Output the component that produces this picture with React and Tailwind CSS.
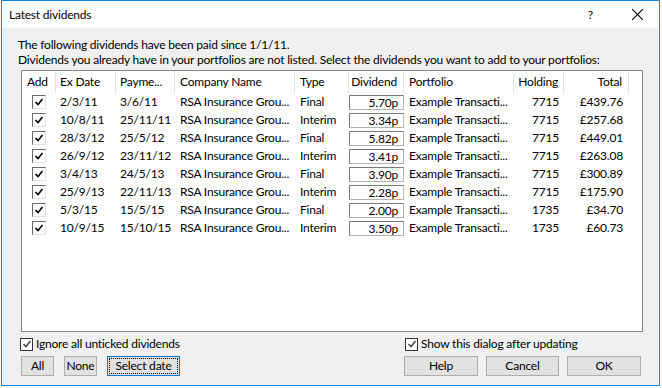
const rows = [
  ["2/3/11", "3/6/11", "Final", "5.70p", "7715", "£439.76"],
  ["10/8/11", "25/11/11", "Interim", "3.34p", "7715", "£257.68"],
  ["28/3/12", "25/5/12", "Final", "5.82p", "7715", "£449.01"],
  ["26/9/12", "23/11/12", "Interim", "3.41p", "7715", "£263.08"],
  ["3/4/13", "24/5/13", "Final", "3.90p", "7715", "£300.89"],
  ["25/9/13", "22/11/13", "Interim", "2.28p", "7715", "£175.90"],
  ["5/3/15", "15/5/15", "Final", "2.00p", "1735", "£34.70"],
  ["10/9/15", "15/10/15", "Interim", "3.50p", "1735", "£60.73"],
];

const cols = "grid grid-cols-[34px_60px_59px_120px_54px_55px_110px_50px_65px]";

function Tick({ className }) {
  return (
    <svg viewBox="0 0 10 10" className={className}>
      <path d="M1.5 5 L4 7.5 L8.5 2" fill="none" stroke="currentColor" strokeWidth="1.6" />
    </svg>
  );
}

function RowCheck() {
  return (
    <span className="ml-[10px] w-[14px] h-[14px] bg-white border-t border-l border-[#696969] border-r border-b border-r-[#e3e3e3] border-b-[#e3e3e3] flex items-center justify-center">
      <Tick className="w-[10px] h-[10px] text-black" />
    </span>
  );
}

function Check({ label }) {
  return (
    <label className="flex items-center gap-[3px] whitespace-nowrap">
      <span className="w-[13px] h-[13px] bg-white border border-[#333333] flex items-center justify-center">
        <Tick className="w-[10px] h-[10px] text-[#4a4a4a]" />
      </span>
      <span>{label}</span>
    </label>
  );
}

function Button({ children, width, focused }) {
  if (focused) {
    return (
      <button className={"h-[20px] bg-[#e1e1e1] border border-[#0078d7] p-[1px] flex whitespace-nowrap " + width}>
        <span className="flex-1 border border-dotted border-black flex items-center justify-center">{children}</span>
      </button>
    );
  }
  return (
    <button className={"h-[20px] bg-[#e1e1e1] border border-[#adadad] flex items-center justify-center whitespace-nowrap " + width}>
      {children}
    </button>
  );
}

export default function App() {
  return (
    <div className="w-[662px] h-[388px] bg-white text-[12px] tracking-[-0.2px] text-black font-['Lato',sans-serif]">
      <div className="ml-[1px] w-[659px] h-[386px] border border-[#1883d7] flex flex-col">
        <div className="h-[27px] shrink-0 bg-white flex items-center pl-[7px]">
          <span>Latest dividends</span>
          <span className="ml-auto mr-[39px]">?</span>
          <svg viewBox="0 0 10 10" className="w-[11px] h-[11px] mr-[16px]">
            <path d="M0 0 L10 10 M10 0 L0 10" stroke="black" strokeWidth="1" />
          </svg>
        </div>
        <div className="flex-1 bg-[#f0f0f0] pl-[16px] pt-[9px]">
          <p className="leading-[15px]">The following dividends have been paid since 1/1/11.</p>
          <p className="leading-[15px] whitespace-nowrap">
            Dividends you already have in your portfolios are not listed. Select the dividends you want to add to your portfolios:
          </p>
          <div className="ml-[3px] mt-[3px] w-[622px] h-[262px] bg-white border border-[#828790]">
            <div className={cols + " h-[22px] whitespace-nowrap"}>
              <div className="border-r border-[#e5e5e5] pl-[5px] flex items-center">Add</div>
              <div className="border-r border-[#e5e5e5] pl-[4px] flex items-center">Ex Date</div>
              <div className="border-r border-[#e5e5e5] pl-[4px] flex items-center">Payme...</div>
              <div className="border-r border-[#e5e5e5] pl-[5px] flex items-center">Company Name</div>
              <div className="border-r border-[#e5e5e5] pl-[5px] flex items-center">Type</div>
              <div className="border-r border-[#e5e5e5] pr-[6px] flex items-center justify-end">Dividend</div>
              <div className="border-r border-[#e5e5e5] pl-[5px] flex items-center">Portfolio</div>
              <div className="border-r border-[#e5e5e5] pr-[5px] flex items-center justify-end">Holding</div>
              <div className="border-r border-[#e5e5e5] pr-[6px] flex items-center justify-end">Total</div>
            </div>
            {rows.map((r, i) => (
              <div key={i} className={cols + " h-[18px] items-center whitespace-nowrap"}>
                <div className="flex items-center">
                  <RowCheck />
                </div>
                <div className="pl-[4px]">{r[0]}</div>
                <div className="pl-[4px]">{r[1]}</div>
                <div className="pl-[5px]">RSA Insurance Grou...</div>
                <div className="pl-[5px]">{r[2]}</div>
                <div className="flex">
                  <span className="w-[55px] h-[15px] border border-[#7a7a7a] border-r-[#b4b4b4] border-b-[#b4b4b4] bg-white text-right pr-[5px] leading-[13px]">
                    {r[3]}
                  </span>
                </div>
                <div className="pl-[5px]">Example Transacti...</div>
                <div className="pr-[5px] text-right">{r[4]}</div>
                <div className="pr-[6px] text-right">{r[5]}</div>
              </div>
            ))}
          </div>
          <div className="flex mt-[3px] ml-[2px] w-[622px]">
            <div className="w-[385px]">
              <Check label="Ignore all unticked dividends" />
            </div>
            <Check label="Show this dialog after updating" />
          </div>
          <div className="flex mt-[3px] ml-[3px] w-[620px]">
            <div className="flex gap-[10px]">
              <Button width="w-[33px]">All</Button>
              <Button width="w-[33px]">None</Button>
              <Button width="w-[73px]" focused>
                Select date
              </Button>
            </div>
            <div className="ml-auto flex gap-[8px]">
              <Button width="w-[74px]">Help</Button>
              <Button width="w-[73px]">Cancel</Button>
              <Button width="w-[74px]">OK</Button>
            </div>
          </div>
        </div>
      </div>
    </div>
  );
}
